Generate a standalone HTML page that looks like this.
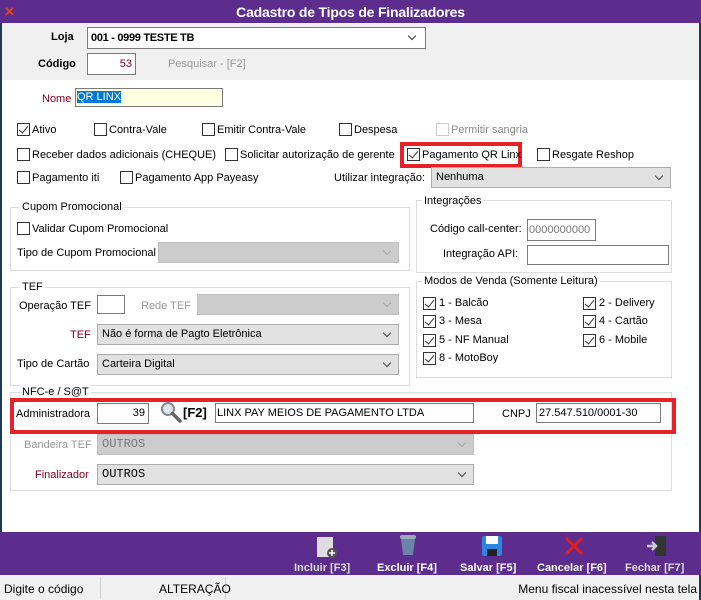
<!DOCTYPE html>
<html><head><meta charset="utf-8"><style>
*{margin:0;padding:0;box-sizing:border-box}
body{width:701px;height:600px;position:relative;background:#fff;font-family:"Liberation Sans",sans-serif;font-size:11px;color:#000;overflow:hidden}
.a{position:absolute;white-space:nowrap}
.t{position:absolute;white-space:nowrap;line-height:14px}
.cb{position:absolute;width:13px;height:13px;border:1px solid #333;background:#fff}
.cb.c::after{content:"";position:absolute;left:3px;top:0px;width:4px;height:8px;border:solid #333;border-width:0 1px 1px 0;transform:rotate(40deg)}
.in{position:absolute;border:1px solid #7a7a7a;background:#fff;line-height:18px;padding:0 3px}
.cmb{position:absolute;border:1px solid #adadad;background:#e1e1e1;line-height:18px;padding:0 4px}
.cmb.d{background:#ccc;border-color:#bfbfbf}
.cmb::after{content:"";position:absolute;right:8px;top:5px;width:5px;height:5px;border:solid #444;border-width:0 1px 1px 0;transform:rotate(45deg)}
.cmb.d::after{border-color:#aaa}
.grp{position:absolute;border:1px solid #dcdcdc}
.lg{position:absolute;background:#fff;padding:0 2px;line-height:14px}
.red{color:#800020}
.gr{color:#8a8a8a}
.mono{font-family:"Liberation Mono",monospace;font-size:12px}
.btn{position:absolute;top:534px;text-align:center;color:#fff;font-weight:bold;font-size:11px}
</style></head><body>
<div class="a" style="left:0;top:0;width:701px;height:23px;background:#5c2d8d"></div>
<div class="a" style="left:0;top:0;width:701px;line-height:24px;text-align:center;color:#fff;font-weight:bold;font-size:14px;letter-spacing:-0.2px">Cadastro de Tipos de Finalizadores</div>
<div class="a" style="left:4px;top:4px;color:#e0451c;font-weight:bold;font-size:13px">✕</div>
<div class="a" style="left:0;top:23px;width:701px;height:57px;background:#f0f0f0"></div>
<div class="a" style="left:0;top:23px;width:2px;height:509px;background:#1c3a55"></div>
<div class="a" style="left:699px;top:23px;width:2px;height:577px;background:#1c3a55"></div>

<div class="t" style="left:51px;top:30px;font-weight:bold">Loja</div>
<div class="in" style="left:87px;top:27px;width:339px;height:22px;font-weight:bold;line-height:20px;letter-spacing:-0.3px">001 - 0999 TESTE TB</div>
<div class="a" style="left:409px;top:33px;width:6px;height:6px;border:solid #333;border-width:0 1px 1px 0;transform:rotate(45deg)"></div>
<div class="t" style="left:38px;top:57px;font-weight:bold">Código</div>
<div class="in" style="left:87px;top:53px;width:49px;height:22px;text-align:right;color:#800020;line-height:20px">53</div>
<div class="t gr" style="left:168px;top:57px;color:#999">Pesquisar - [F2]</div>

<div class="t red" style="left:42px;top:92px">Nome</div>
<div class="in" style="left:75px;top:88px;width:148px;height:19px;background:#ffffe1;line-height:16px;padding:0 1px"><span style="background:#0078d7;color:#fff">QR LINX</span></div>

<div class="cb c" style="left:17px;top:123px"></div><div class="t" style="left:32px;top:123px">Ativo</div>
<div class="cb" style="left:94px;top:123px"></div><div class="t" style="left:109px;top:123px">Contra-Vale</div>
<div class="cb" style="left:202px;top:123px"></div><div class="t" style="left:217px;top:123px">Emitir Contra-Vale</div>
<div class="cb" style="left:339px;top:123px"></div><div class="t" style="left:354px;top:123px">Despesa</div>
<div class="cb" style="left:436px;top:123px;border-color:#ccc"></div><div class="t" style="left:451px;top:123px;color:#888">Permitir sangria</div>

<div class="cb" style="left:17px;top:148px"></div><div class="t" style="left:32px;top:148px">Receber dados adicionais (CHEQUE)</div>
<div class="cb" style="left:225px;top:148px"></div><div class="t" style="left:240px;top:148px">Solicitar autorização de gerente</div>
<div class="a" style="left:400px;top:142px;width:122px;height:26px;border:4px solid #e8202a"></div>
<div class="cb c" style="left:407px;top:148px"></div><div class="t" style="left:422px;top:148px">Pagamento QR Linx</div>
<div class="cb" style="left:537px;top:148px"></div><div class="t" style="left:552px;top:148px">Resgate Reshop</div>

<div class="cb" style="left:17px;top:171px"></div><div class="t" style="left:32px;top:171px">Pagamento iti</div>
<div class="cb" style="left:120px;top:171px"></div><div class="t" style="left:135px;top:171px">Pagamento App Payeasy</div>
<div class="t" style="left:334px;top:171px">Utilizar integração:</div>
<div class="cmb" style="left:431px;top:167px;width:240px;height:21px">Nenhuma</div>

<div class="grp" style="left:10px;top:207px;width:400px;height:64px"></div>
<div class="lg" style="left:20px;top:200px">Cupom Promocional</div>
<div class="cb" style="left:17px;top:222px"></div><div class="t" style="left:32px;top:222px">Validar Cupom Promocional</div>
<div class="t" style="left:17px;top:246px">Tipo de Cupom Promocional</div>
<div class="cmb d" style="left:158px;top:242px;width:241px;height:21px"></div>

<div class="grp" style="left:10px;top:287px;width:400px;height:99px"></div>
<div class="lg" style="left:20px;top:280px">TEF</div>
<div class="t" style="left:19px;top:299px">Operação TEF</div>
<div class="in" style="left:97px;top:295px;width:28px;height:19px"></div>
<div class="t" style="left:141px;top:299px;color:#999">Rede TEF</div>
<div class="cmb d" style="left:197px;top:294px;width:202px;height:21px"></div>
<div class="t red" style="left:70px;top:328px">TEF</div>
<div class="cmb" style="left:97px;top:324px;width:302px;height:21px">Não é forma de Pagto Eletrônica</div>
<div class="t" style="left:17px;top:357px">Tipo de Cartão</div>
<div class="cmb" style="left:97px;top:354px;width:302px;height:21px">Carteira Digital</div>

<div class="grp" style="left:416px;top:200px;width:256px;height:73px"></div>
<div class="lg" style="left:422px;top:194px">Integrações</div>
<div class="t" style="left:430px;top:222px">Código call-center:</div>
<div class="in" style="left:527px;top:219px;width:69px;height:22px;color:#777;padding:0 1px;line-height:20px">0000000000</div>
<div class="t" style="left:443px;top:247px">Integração API:</div>
<div class="in" style="left:527px;top:245px;width:142px;height:20px"></div>

<div class="grp" style="left:416px;top:281px;width:256px;height:97px"></div>
<div class="lg" style="left:422px;top:274px">Modos de Venda (Somente Leitura)</div>
<div class="cb c" style="left:423px;top:297px"></div><div class="t" style="left:439px;top:296px">1 - Balcão</div>
<div class="cb c" style="left:423px;top:315px"></div><div class="t" style="left:439px;top:314px">3 - Mesa</div>
<div class="cb c" style="left:423px;top:334px"></div><div class="t" style="left:439px;top:333px">5 - NF Manual</div>
<div class="cb c" style="left:423px;top:352px"></div><div class="t" style="left:439px;top:351px">8 - MotoBoy</div>
<div class="cb c" style="left:583px;top:297px"></div><div class="t" style="left:599px;top:296px">2 - Delivery</div>
<div class="cb c" style="left:583px;top:315px"></div><div class="t" style="left:599px;top:314px">4 - Cartão</div>
<div class="cb c" style="left:583px;top:334px"></div><div class="t" style="left:599px;top:333px">6 - Mobile</div>

<div class="grp" style="left:10px;top:392px;width:662px;height:99px"></div>
<div class="lg" style="left:20px;top:385px">NFC-e / S@T</div>
<div class="a" style="left:10px;top:398px;width:666px;height:36px;border:4px solid #e8202a"></div>
<div class="t" style="left:16px;top:407px">Administradora</div>
<div class="in" style="left:97px;top:403px;width:52px;height:21px;text-align:right;line-height:19px">39</div>
<svg class="a" style="left:160px;top:401px" width="22" height="22" viewBox="0 0 22 22"><circle cx="8" cy="8" r="6" fill="#dde6ee" stroke="#888" stroke-width="2"/><line x1="12.5" y1="12.5" x2="20" y2="20" stroke="#666" stroke-width="3.5" stroke-linecap="round"/></svg>
<div class="t" style="left:183px;top:406px;font-weight:bold;font-size:13px">[F2]</div>
<div class="in" style="left:215px;top:403px;width:259px;height:20px;padding:0 1px;line-height:18px">LINX PAY MEIOS DE PAGAMENTO LTDA</div>
<div class="t" style="left:502px;top:407px">CNPJ</div>
<div class="in" style="left:536px;top:403px;width:125px;height:20px;padding:0 2px;line-height:18px">27.547.510/0001-30</div>
<div class="t" style="left:24px;top:438px;color:#999">Bandeira TEF</div>
<div class="cmb d mono" style="left:97px;top:434px;width:377px;height:21px;color:#777">OUTROS</div>
<div class="t red" style="left:35px;top:468px">Finalizador</div>
<div class="cmb mono" style="left:97px;top:464px;width:377px;height:21px">OUTROS</div>

<div class="a" style="left:0;top:532px;width:701px;height:43px;background:#5c2d8d"></div>
<div class="a" style="left:0;top:575px;width:699px;height:25px;background:#f0f0f0"></div>
<div class="a" style="left:100px;top:577px;width:1px;height:22px;background:#d0d0d0"></div>
<div class="a" style="left:225px;top:577px;width:1px;height:22px;background:#d0d0d0"></div>
<div class="t" style="left:4px;top:582px;font-size:12px">Digite o código</div>
<div class="t" style="left:159px;top:582px;font-size:12px">ALTERAÇÃO</div>
<div class="t" style="right:4px;top:582px;font-size:12px">Menu fiscal inacessível nesta tela</div>

<svg class="a" style="left:315px;top:535px" width="24" height="24"><rect x="2" y="2" width="16" height="20" fill="#ddd"/><circle cx="17" cy="18" r="5" fill="#555"/><path d="M17 15v6M14 18h6" stroke="#fff" stroke-width="1.5"/></svg>
<div class="btn" style="left:294px;top:562px;color:#ddd">Incluir [F3]</div>
<svg class="a" style="left:398px;top:534px" width="20" height="22"><rect x="2" y="1" width="16" height="4" rx="2" fill="#9ab"/><path d="M3 5h14l-2 16H5z" fill="#6a85a8"/></svg>
<div class="btn" style="left:377px;top:562px">Excluir [F4]</div>
<svg class="a" style="left:481px;top:535px" width="22" height="22"><rect x="1" y="1" width="20" height="20" rx="2" fill="#2b86e0"/><rect x="5" y="1" width="12" height="8" fill="#fff"/><rect x="6" y="14" width="10" height="7" fill="#222"/></svg>
<div class="btn" style="left:460px;top:562px">Salvar [F5]</div>
<svg class="a" style="left:563px;top:536px" width="22" height="20"><path d="M3 2L19 18M19 2L3 18" stroke="#e02020" stroke-width="3"/></svg>
<div class="btn" style="left:537px;top:562px">Cancelar [F6]</div>
<svg class="a" style="left:646px;top:535px" width="22" height="22"><rect x="9" y="1" width="11" height="20" fill="#333"/><path d="M1 11h8M6 7l4 4-4 4" stroke="#ccc" stroke-width="2.5" fill="none"/></svg>
<div class="btn" style="left:625px;top:562px;color:#ddd">Fechar [F7]</div>
</body></html>
